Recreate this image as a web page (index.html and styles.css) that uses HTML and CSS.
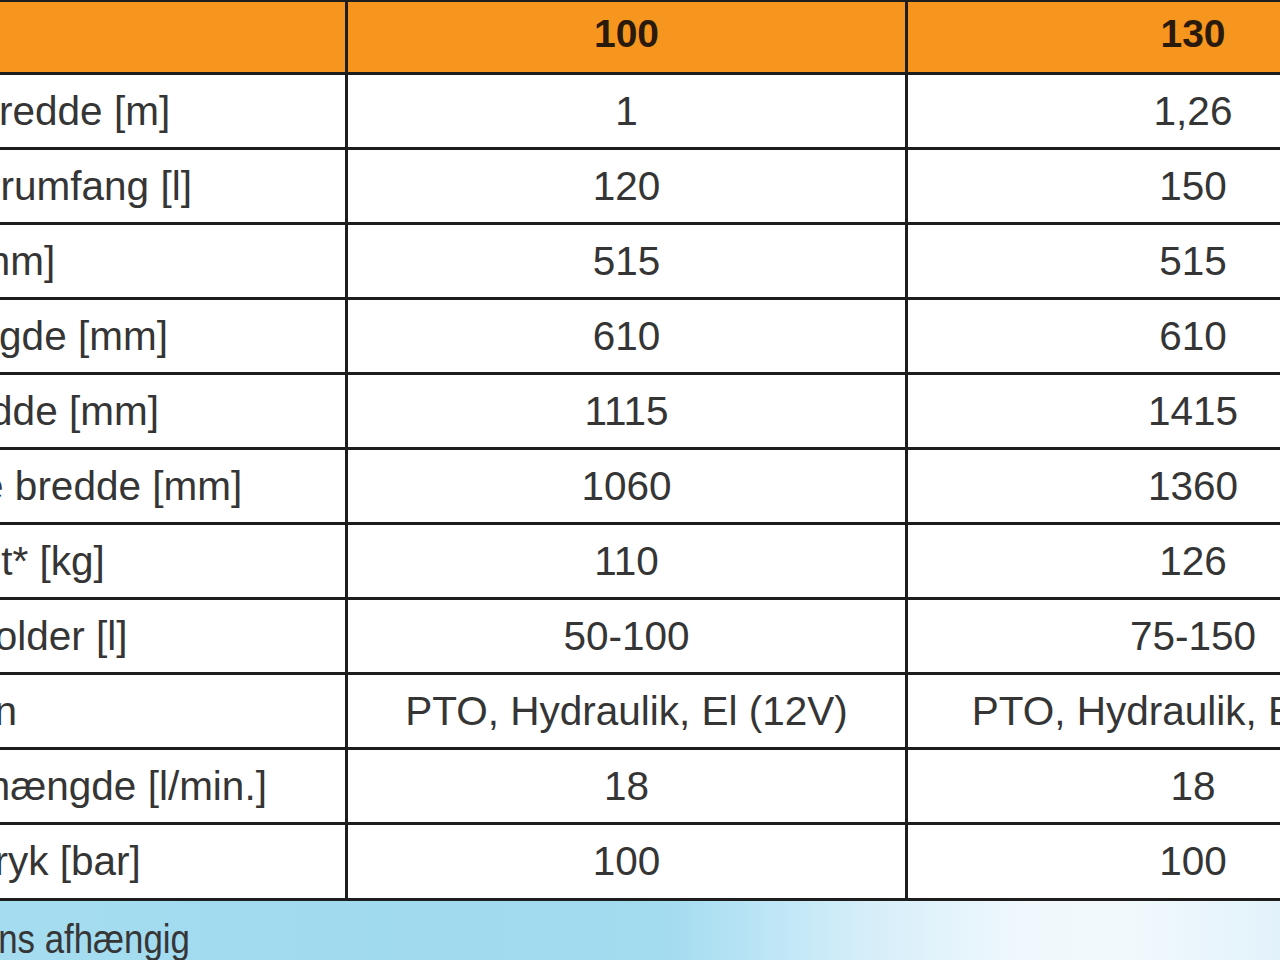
FILE: index.html
```html
<!DOCTYPE html>
<html lang="da">
<head>
<meta charset="utf-8">
<title>Specifikationer</title>
<link rel="stylesheet" href="styles.css">
</head>
<body>
<div class="page">
  <div class="grid">
    <div class="cell head label"></div><div class="cell head">100</div><div class="cell head">130</div>
    <div class="cell label">Sprøjtebredde [m]</div><div class="cell">1</div><div class="cell">1,26</div>
    <div class="cell label">Effektivt rumfang [l]</div><div class="cell">120</div><div class="cell">150</div>
    <div class="cell label">Højde [mm]</div><div class="cell">515</div><div class="cell">515</div>
    <div class="cell label">Totallængde [mm]</div><div class="cell">610</div><div class="cell">610</div>
    <div class="cell label">Totalbredde [mm]</div><div class="cell">1115</div><div class="cell">1415</div>
    <div class="cell label">Passage bredde [mm]</div><div class="cell">1060</div><div class="cell">1360</div>
    <div class="cell label">Tomvægt* [kg]</div><div class="cell">110</div><div class="cell">126</div>
    <div class="cell label">Slangeholder [l]</div><div class="cell">50-100</div><div class="cell">75-150</div>
    <div class="cell label">Drivtypen</div><div class="cell">PTO, Hydraulik, El (12V)</div><div class="cell">PTO, Hydraulik, El (12V)</div>
    <div class="cell label">Sprøjtemængde [l/min.]</div><div class="cell">18</div><div class="cell">18</div>
    <div class="cell label">Arbejdstryk [bar]</div><div class="cell">100</div><div class="cell">100</div>
  </div>
  <p class="note"><span class="note-text">*Vægt er versions afhængig</span></p>
</div>
</body>
</html>
```
FILE: styles.css
```css
html, body {
  margin: 0;
  padding: 0;
}
body {
  width: 1280px;
  height: 960px;
  overflow: hidden;
  font-family: "Liberation Sans", Arial, sans-serif;
}
.page {
  width: 1280px;
  height: 960px;
  overflow: hidden;
  background: linear-gradient(90deg, #a5dcf0 0%, #a0daef 30%, #a3dbef 52%, #b3e2f4 57%, #d6eef9 68%, #f0f8fd 80%, #f1f9fd 88%, #e2f2fa 100%);
}
.grid {
  display: grid;
  grid-template-columns: 507px 557px 570px;
  grid-template-rows: 70px repeat(10, 72px) 73px;
  gap: 3px;
  padding: 3px;
  width: max-content;
  margin-left: -165px;
  margin-top: -1px;
  background: #1d1d1d;
}
.cell {
  background: #ffffff;
  color: #353535;
  font-size: 40.5px;
  display: flex;
  align-items: center;
  justify-content: center;
  white-space: nowrap;
  overflow: hidden;
}
.cell.label {
  justify-content: flex-start;
  padding-left: 8px;
}
.cell.head {
  background: #f7961e;
  color: #2a1a0b;
  font-weight: bold;
  font-size: 39px;
  padding-bottom: 6px;
  box-sizing: border-box;
}
.note {
  margin: 18px 0 0 -242px;
  line-height: 40px;
  white-space: nowrap;
}
.note-text {
  display: inline-block;
  font-size: 41px;
  color: #363636;
  transform: scaleX(0.85);
  transform-origin: left center;
}
```
